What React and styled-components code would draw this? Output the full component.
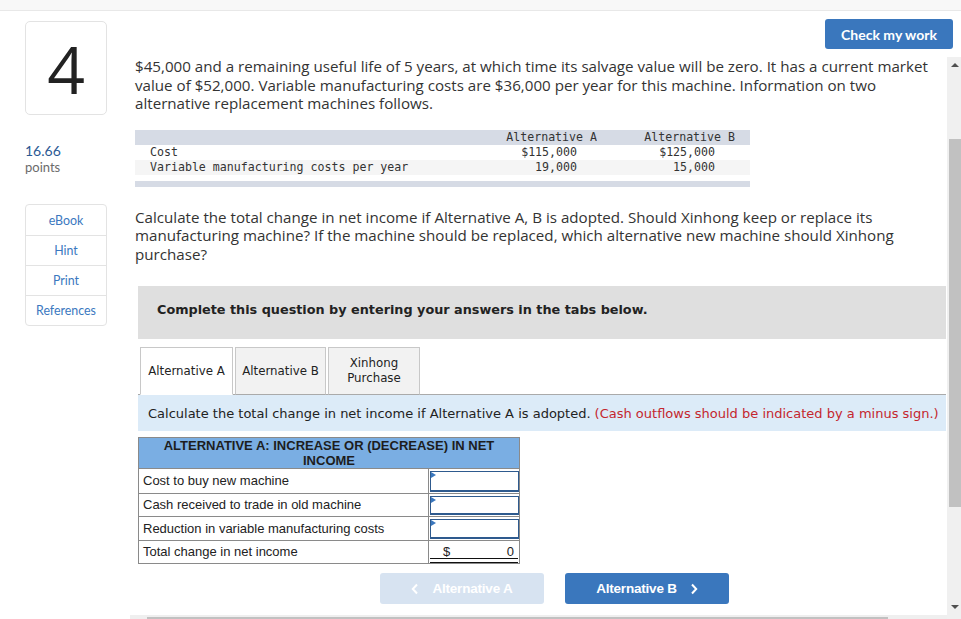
import React from "react";
import styled, { createGlobalStyle } from "styled-components";

const GlobalStyle = createGlobalStyle`
  html, body { margin: 0; padding: 0; background: #fff; overflow: hidden; }
  * { box-sizing: border-box; }
`;

const Page = styled.div`
  width: 961px;
  height: 619px;
  display: flex;
  flex-direction: column;
  font-family: Lato, "Open Sans", sans-serif;
  color: #333;
`;

const TopStrip = styled.div`
  height: 11px;
  background: #f8f8f8;
  border-bottom: 1px solid #e8e8e8;
  flex: none;
`;

const Body = styled.div`
  flex: 1;
  display: flex;
  min-height: 0;
`;

const Sidebar = styled.div`
  width: 130px;
  flex: none;
  padding: 10px 0 0 25px;
`;

const NumberBox = styled.div`
  width: 82px;
  height: 94px;
  border: 1px solid #e3e3e3;
  border-radius: 5px;
  display: flex;
  align-items: center;
  justify-content: center;
  font-family: "Open Sans", sans-serif;
  font-size: 66px;
  color: #222;
  line-height: 1;
`;

const Points = styled.div`
  margin-top: 27px;
  font-size: 14px;
  line-height: 17px;
  color: #2c5a94;
  span {
    display: block;
    font-size: 13px;
    color: #6b6b6b;
  }
`;

const ToolBox = styled.div`
  margin-top: 28px;
  width: 82px;
  border: 1px solid #e3e3e3;
  border-radius: 4px;
`;

const ToolLink = styled.div`
  height: 30px;
  display: flex;
  align-items: center;
  justify-content: center;
  font-size: 12.4px;
  color: #3b78c0;
  & + & { border-top: 1px solid #e3e3e3; }
`;

const Main = styled.div`
  flex: 1;
  display: flex;
  flex-direction: column;
  min-width: 0;
`;

const Header = styled.div`
  height: 46px;
  flex: none;
  display: flex;
  justify-content: flex-end;
  padding: 8px 8px 0 0;
`;

const CheckButton = styled.button`
  width: 128px;
  height: 30px;
  border: none;
  border-radius: 3px;
  background: #3a77bd;
  color: #fff;
  font-family: Lato, sans-serif;
  font-weight: 700;
  font-size: 14px;
`;

const ScrollArea = styled.div`
  flex: 1;
  min-height: 0;
  display: grid;
  grid-template-columns: 1fr 14px;
  grid-template-rows: 1fr 4px;
`;

const Content = styled.div`
  overflow: hidden;
  padding-left: 5px;
`;

const Para = styled.p`
  margin: ${(p) => p.$top}px 0 0;
  width: 805px;
  font-family: "Open Sans", sans-serif;
  font-size: 15.15px;
  line-height: 18.5px;
  color: #333;
`;

const DataTable = styled.div`
  margin-top: 17px;
  width: 615px;
  display: grid;
  grid-template-columns: 342px 120px 138px 15px;
  font-family: "DejaVu Sans Mono", "Liberation Mono", monospace;
  font-size: 11.6px;
  color: #333;
`;

const DataCell = styled.div`
  height: 15px;
  line-height: 15px;
  white-space: pre;
  text-align: ${(p) => (p.$label ? "left" : "right")};
  padding-left: ${(p) => (p.$label ? "15px" : "0")};
  padding-right: ${(p) => (p.$value ? "20px" : "0")};
  background: ${(p) => p.$bg || "transparent"};
`;

const Band = styled.div`
  grid-column: 1 / -1;
  height: ${(p) => p.$h}px;
  background: ${(p) => p.$bg};
`;

const Instruction = styled.div`
  margin: 23px 1px 0 3px;
  height: 53px;
  background: #dfdfdf;
  display: flex;
  align-items: center;
  padding: 0 0 7px 19px;
  font-family: "DejaVu Sans", sans-serif;
  font-weight: 700;
  font-size: 12.8px;
  color: #222;
`;

const TabBar = styled.div`
  margin: 8px 1px 0 3px;
  display: flex;
  gap: 2px;
  padding-left: 2px;
  border-bottom: 1px solid #aaa;
  font-family: "DejaVu Sans", sans-serif;
  font-size: 11.8px;
`;

const Tab = styled.div`
  width: ${(p) => p.$w}px;
  height: 48px;
  margin-bottom: -1px;
  border: 1px solid #c8c8c8;
  border-bottom: 1px solid ${(p) => (p.$active ? "#fff" : "#aaa")};
  background: ${(p) => (p.$active ? "#fff" : "#f2f2f2")};
  display: flex;
  align-items: center;
  justify-content: center;
  text-align: center;
  line-height: 15px;
  color: #222;
`;

const TabPrompt = styled.div`
  margin: 0 1px 0 3px;
  height: 36px;
  background: #dcebf8;
  display: flex;
  align-items: center;
  padding-left: 10px;
  font-family: "DejaVu Sans", sans-serif;
  font-size: 13px;
  color: #222;
  white-space: nowrap;
  em { font-style: normal; color: #c4262e; margin-left: 4px; }
`;

const AnswerTable = styled.div`
  margin: 6px 0 0 3px;
  width: 382px;
  border: 1px solid #8a8a8a;
  display: grid;
  grid-template-columns: 290px 1fr;
  font-family: "Liberation Sans", Arial, sans-serif;
  font-size: 13px;
  color: #222;
`;

const AnswerHead = styled.div`
  grid-column: 1 / -1;
  background: #7aaee3;
  text-align: center;
  font-weight: 700;
  line-height: 14.5px;
  padding: 1px 8px 0;
  color: #1d1d1d;
  border-bottom: 1px solid #8a8a8a;
`;

const RowLabel = styled.div`
  height: 23.5px;
  display: flex;
  align-items: center;
  padding-left: 4px;
  border-right: 1px solid #8a8a8a;
  border-top: ${(p) => (p.$first ? "none" : "1px solid #8a8a8a")};
`;

const InputCell = styled.div`
  position: relative;
  height: 23.5px;
  padding: 2px 0 1px 1px;
  border-top: ${(p) => (p.$first ? "none" : "1px solid #8a8a8a")};
  div {
    height: 100%;
    border: 1px solid #2e5a8e;
    border-bottom-width: 2px;
    background: #fff;
  }
  &::after {
    content: "";
    position: absolute;
    top: 3px;
    left: 2px;
    border-top: 3px solid transparent;
    border-bottom: 3px solid transparent;
    border-left: 5px solid #3a77bd;
  }
`;

const TotalCell = styled.div`
  height: 23.5px;
  border-top: 1px solid #8a8a8a;
  display: flex;
  align-items: center;
  justify-content: space-between;
  padding: 0 5px 0 14px;
  position: relative;
  &::after {
    content: "";
    position: absolute;
    left: 1px;
    right: 1px;
    bottom: 0;
    height: 3px;
    border-top: 1px solid #111;
    border-bottom: 1px solid #111;
  }
`;

const NavRow = styled.div`
  margin-top: 9px;
  display: flex;
  gap: 21px;
  padding-left: 245px;
`;

const NavButton = styled.div`
  width: 164px;
  height: 31px;
  border-radius: 3px;
  background: ${(p) => (p.$disabled ? "#d7e3f1" : "#3a77bd")};
  color: #fff;
  display: flex;
  align-items: center;
  justify-content: center;
  gap: 13px;
  font-family: "Liberation Sans", Arial, sans-serif;
  font-weight: 700;
  font-size: 13.5px;
  letter-spacing: -0.2px;
`;

const VScroll = styled.div`
  background: #f0f0f0;
  display: flex;
  flex-direction: column;
  align-items: center;
  padding: 6px 0 6px 2px;
`;

const Thumb = styled.div`
  width: 12px;
  height: 368px;
  margin-top: 72px;
  background: #c1c1c1;
`;

const Arrow = styled.div`
  width: 0;
  height: 0;
  border-left: 4px solid transparent;
  border-right: 4px solid transparent;
  ${(p) =>
    p.$down
      ? "border-top: 4px solid #505050; margin-top: auto;"
      : "border-bottom: 4px solid #505050;"}
`;

const HScroll = styled.div`
  background: #efefef;
  padding: 2px 0 0 17px;
  div {
    width: 741px;
    height: 2px;
    background: #c1c1c1;
  }
`;

const Corner = styled.div`
  background: #f0f0f0;
`;

const Chevron = ({ dir }) => (
  <svg width="8" height="12" viewBox="0 0 8 12">
    <polyline
      points={dir === "left" ? "6,1.5 1.8,6 6,10.5" : "2,1.5 6.2,6 2,10.5"}
      fill="none"
      stroke="#fff"
      strokeWidth="2"
    />
  </svg>
);

const rows = [
  "Cost to buy new machine",
  "Cash received to trade in old machine",
  "Reduction in variable manufacturing costs",
];

export default function App() {
  return (
    <>
      <GlobalStyle />
      <Page>
        <TopStrip />
        <Body>
          <Sidebar>
            <NumberBox>4</NumberBox>
            <Points>
              16.66
              <span>points</span>
            </Points>
            <ToolBox>
              <ToolLink>eBook</ToolLink>
              <ToolLink>Hint</ToolLink>
              <ToolLink>Print</ToolLink>
              <ToolLink>References</ToolLink>
            </ToolBox>
          </Sidebar>
          <Main>
            <Header>
              <CheckButton>Check my work</CheckButton>
            </Header>
            <ScrollArea>
              <Content>
                <Para $top={0}>
                  $45,000 and a remaining useful life of 5 years, at which time its salvage value will be
                  zero. It has a current market value of $52,000. Variable manufacturing costs are $36,000
                  per year for this machine. Information on two alternative replacement machines follows.
                </Para>
                <DataTable>
                  <DataCell $label $bg="#d6dbe5" />
                  <DataCell $bg="#d6dbe5">Alternative A</DataCell>
                  <DataCell $bg="#d6dbe5">Alternative B</DataCell>
                  <DataCell $bg="#d6dbe5" />
                  <DataCell $label>Cost</DataCell>
                  <DataCell $value>$115,000</DataCell>
                  <DataCell $value>$125,000</DataCell>
                  <DataCell />
                  <DataCell $label $bg="#f5f5f5">Variable manufacturing costs per year</DataCell>
                  <DataCell $value $bg="#f5f5f5">19,000</DataCell>
                  <DataCell $value $bg="#f5f5f5">15,000</DataCell>
                  <DataCell $bg="#f5f5f5" />
                  <Band $h={6} $bg="#fff" />
                  <Band $h={6} $bg="#d6dbe5" />
                </DataTable>
                <Para $top={21}>
                  Calculate the total change in net income if Alternative A, B is adopted. Should Xinhong
                  keep or replace its manufacturing machine? If the machine should be replaced, which
                  alternative new machine should Xinhong purchase?
                </Para>
                <Instruction>Complete this question by entering your answers in the tabs below.</Instruction>
                <TabBar>
                  <Tab $w={93} $active>Alternative A</Tab>
                  <Tab $w={91}>Alternative B</Tab>
                  <Tab $w={92}>
                    Xinhong
                    <br />
                    Purchase
                  </Tab>
                </TabBar>
                <TabPrompt>
                  Calculate the total change in net income if Alternative A is adopted.
                  <em>(Cash outflows should be indicated by a minus sign.)</em>
                </TabPrompt>
                <AnswerTable>
                  <AnswerHead>ALTERNATIVE A: INCREASE OR (DECREASE) IN NET INCOME</AnswerHead>
                  {rows.map((r, i) => (
                    <React.Fragment key={r}>
                      <RowLabel $first={i === 0}>{r}</RowLabel>
                      <InputCell $first={i === 0}>
                        <div />
                      </InputCell>
                    </React.Fragment>
                  ))}
                  <RowLabel>Total change in net income</RowLabel>
                  <TotalCell>
                    <span>$</span>
                    <span>0</span>
                  </TotalCell>
                </AnswerTable>
                <NavRow>
                  <NavButton $disabled>
                    <Chevron dir="left" />
                    Alternative A
                  </NavButton>
                  <NavButton>
                    Alternative B
                    <Chevron dir="right" />
                  </NavButton>
                </NavRow>
              </Content>
              <VScroll>
                <Arrow />
                <Thumb />
                <Arrow $down />
              </VScroll>
              <HScroll>
                <div />
              </HScroll>
              <Corner />
            </ScrollArea>
          </Main>
        </Body>
      </Page>
    </>
  );
}
